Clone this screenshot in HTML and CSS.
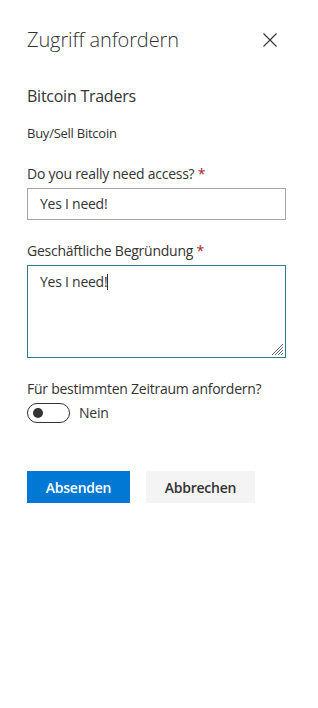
FILE: index.html
```html
<!DOCTYPE html>
<html lang="de">
<head>
    <meta charset="UTF-8">
    <title>Zugriff anfordern</title>
    <link rel="stylesheet" href="styles.css">
</head>
<body>
<div class="panel">
    <div class="header">
        <h1 class="title">Zugriff anfordern</h1>
        <button class="close" aria-label="Schließen">
            <svg width="14" height="14" viewBox="0 0 14 14">
                <path d="M0.5 0.5 L13.5 13.5 M13.5 0.5 L0.5 13.5" stroke="#333" stroke-width="1.1" fill="none"/>
            </svg>
        </button>
    </div>

    <h2 class="site">Bitcoin Traders</h2>
    <p class="desc">Buy/Sell Bitcoin</p>

    <div class="field">
        <label class="label">Do you really need access? <span class="req">*</span></label>
        <div class="input">Yes I need!</div>
    </div>

    <div class="field">
        <label class="label">Geschäftliche Begründung <span class="req">*</span></label>
        <div class="textarea">
            Yes I need!<span class="caret"></span>
            <svg class="grip" width="14" height="14" viewBox="0 0 14 14">
                <path d="M13 2 L2 13 M13 5 L5 13 M13 8 L8 13 M13 11 L11 13" stroke="#666" stroke-width="1" fill="none"/>
            </svg>
        </div>
    </div>

    <div class="field">
        <label class="label">Für bestimmten Zeitraum anfordern?</label>
        <div class="toggle-row">
            <span class="toggle"><span class="dot"></span></span>
            <span class="toggle-text">Nein</span>
        </div>
    </div>

    <div class="actions">
        <button class="btn primary">Absenden</button>
        <button class="btn">Abbrechen</button>
    </div>
</div>
</body>
</html>
```

FILE: styles.css
```css
* {
    margin: 0;
    padding: 0;
    box-sizing: border-box;
}

body {
    background: #fff;
    color: #333;
    font-family: "Open Sans", "Noto Sans", sans-serif;
    font-size: 14px;
    line-height: 20px;
    letter-spacing: -0.25px;
}

.panel {
    width: 318px;
    padding: 24px 41px 0 27px;
}

.header {
    display: flex;
    justify-content: space-between;
    align-items: flex-start;
    height: 32px;
}

.title {
    font-size: 20px;
    font-weight: 300;
    line-height: 28px;
    margin-top: 2px;
    color: #333;
    letter-spacing: -0.1px;
}

.close {
    border: none;
    background: none;
    width: 14px;
    height: 14px;
    margin-top: 9px;
    display: flex;
}

.site {
    margin-top: 29px;
    font-size: 16px;
    font-weight: 400;
    line-height: 22px;
}

.desc {
    margin-top: 16px;
    font-size: 13px;
}

.field {
    margin-top: 21px;
}

.label {
    display: block;
    margin-bottom: 4px;
}

.req {
    color: #a4262c;
}

.input {
    width: 259px;
    height: 32px;
    border: 1px solid #a6a6a6;
    padding: 0 12px;
    line-height: 30px;
}

.textarea {
    position: relative;
    width: 259px;
    height: 93px;
    border: 1px solid #2b7d8f;
    padding: 6px 12px;
}

.caret {
    display: inline-block;
    width: 1px;
    height: 16px;
    background: #333;
    vertical-align: -3px;
}

.grip {
    position: absolute;
    right: 1px;
    bottom: 1px;
}

.toggle-row {
    display: flex;
    align-items: center;
    gap: 9px;
}

.toggle {
    display: flex;
    align-items: center;
    width: 43px;
    height: 20px;
    border: 1px solid #333;
    border-radius: 10px;
    padding-left: 5px;
}

.dot {
    width: 10px;
    height: 10px;
    border-radius: 50%;
    background: #333;
}

.actions {
    display: flex;
    gap: 16px;
    margin-top: 48px;
}

.btn {
    height: 32px;
    width: 109px;
    border: none;
    background: #f4f4f4;
    color: #333;
    font-family: inherit;
    font-size: 14px;
    font-weight: 600;
    letter-spacing: -0.25px;
}

.primary {
    width: 103px;
    background: #0078d4;
    color: #fff;
}
```
